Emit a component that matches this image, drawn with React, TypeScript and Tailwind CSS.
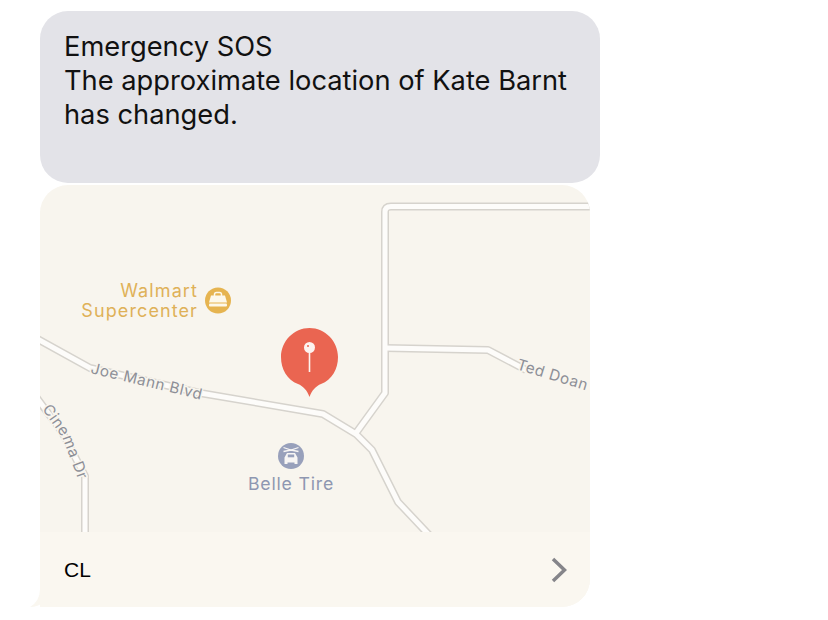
const roads = [
  "M34 337 L90 368 L200 393 L323 414 L356 434 L372 450 L398 502 L432 538",
  "M356 433 L385 393 L385 212 Q385 206.500 391 206.500 L596 206.500",
  "M385 348 L488 350 L526 370",
  "M34 394 L62 432 L85 476 L85 540",
]

function MapDrawing() {
  return (
    <svg viewBox="40 185 550 347" className="block w-[550px] h-[347px] font-['Inter',sans-serif]">
      {roads.map((d) => (
        <path key={d} d={d} fill="none" stroke="#d6d3cd" strokeWidth="8" strokeLinejoin="round" />
      ))}
      {roads.map((d) => (
        <path key={d + "-in"} d={d} fill="none" stroke="#fdfcfa" strokeWidth="5" strokeLinejoin="round" />
      ))}

      <g className="text-[18px] tracking-[1.100px] fill-[#dfb158]">
        <text x="198" y="297" textAnchor="end">Walmart</text>
        <text x="198" y="317" textAnchor="end">Supercenter</text>
      </g>
      <circle cx="218" cy="300.500" r="13" fill="#e6b450" />
      <path d="M214.500 296 v-1.500 q0 -2 2 -2 h3 q2 0 2 2 v1.500" fill="none" stroke="#fdf8ea" strokeWidth="1.500" />
      <path d="M211 295.500 h14 l2 7 h-18 z" fill="#fdf8ea" />
      <rect x="209" y="303.500" width="18" height="3" rx="1" fill="#fdf8ea" />

      <g className="text-[15.200px] tracking-[0.600px] fill-[#8d8f97] stroke-[#f8f5ee] [stroke-width:3px] [paint-order:stroke]">
        <text transform="translate(90 373) rotate(13.500)">Joe Mann Blvd</text>
        <text transform="translate(516 369) rotate(17)">Ted Doan</text>
        <path id="cinema" d="M42 409 L62 437 L83 492" fill="none" stroke="none" />
        <text>
          <textPath href="#cinema">Cinema Dr</textPath>
        </text>
      </g>

      <path
        d="M309.500 397 C307 390 303 386 298 384 C287 380 281 369 281 357 C281 341 294 328 309.500 328 C325 328 338 341 338 357 C338 369 332 380 321 384 C316 386 312 390 309.500 397 Z"
        fill="#ea6551"
      />
      <circle cx="309.500" cy="347.500" r="5.500" fill="#fdf3ef" />
      <circle cx="308" cy="346" r="1" fill="#ea6551" />
      <rect x="308.700" y="352" width="1.600" height="20" fill="#fdf3ef" />

      <circle cx="291" cy="456" r="13" fill="#98a0bb" />
      <path d="M283.500 447.500 L291 450 L298.500 447.500 M283.500 451.500 L291 450 L298.500 451.500" fill="none" stroke="#f7f5f4" strokeWidth="1.300" />
      <path d="M287 453 h8 l2.500 4.500 v6.500 h-3 v-1.500 h-7 v1.500 h-3 v-6.500 z" fill="#f7f5f4" />
      <rect x="287.800" y="454.500" width="6.400" height="2.800" fill="#98a0bb" />

      <text x="291" y="490" textAnchor="middle" className="text-[17.700px] tracking-[0.800px] fill-[#8e97b1]">
        Belle Tire
      </text>
    </svg>
  )
}

export default function App() {
  return (
    <div className="min-h-[620px] bg-white pt-[11px] pl-10 font-['Inter',sans-serif]">
      <div className="w-[560px] h-[172px] rounded-[28px] bg-[#e3e3e8] px-6 pt-[19px] text-[27.270px] leading-[34px] text-[#111]">
        Emergency SOS
        <br />
        The approximate location of Kate Barnt
        <br />
        has changed.
      </div>

      <div className="relative mt-[2px] w-[550px]">
        <div className="overflow-hidden rounded-t-[28px] rounded-br-[28px] bg-[#f8f5ee]">
          <MapDrawing />
          <div className="flex h-[75px] items-center justify-between bg-[#faf7f0] pl-6 pr-[23px]">
            <span className="text-[21px] text-black font-['Liberation_Sans',sans-serif]">CL</span>
            <svg width="16" height="26" viewBox="0 0 16 26" fill="none">
              <path d="M2 2 L13.500 13 L2 24" stroke="#85858a" strokeWidth="3.500" />
            </svg>
          </div>
        </div>
        {/* bubble tail */}
        <svg width="34" height="18" viewBox="0 0 34 18" className="absolute left-[-10px] bottom-0">
          <path d="M10 0 Q10 12 0 18 Q8 18 14 13 Q17 11 22 14 Q26 18 34 18 L34 0 Z" fill="#faf7f0" />
        </svg>
      </div>
    </div>
  )
}
